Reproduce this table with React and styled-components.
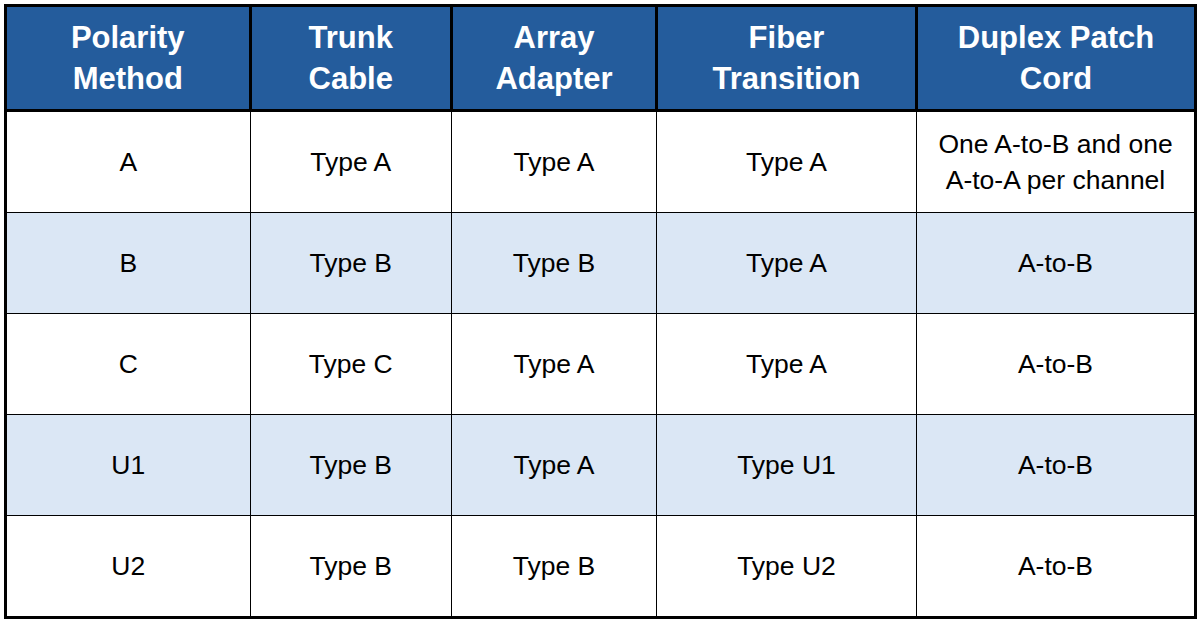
import styled, { createGlobalStyle } from 'styled-components';

const GlobalStyle = createGlobalStyle`
  html, body {
    margin: 0;
    padding: 0;
    background: #fff;
  }
  body {
    font-family: "Liberation Sans", Arial, Helvetica, sans-serif;
  }
`;

const columns = [
  { label: ['Polarity', 'Method'], width: 244.5 },
  { label: ['Trunk', 'Cable'], width: 201.5 },
  { label: ['Array', 'Adapter'], width: 205 },
  { label: ['Fiber', 'Transition'], width: 260 },
  { label: ['Duplex Patch', 'Cord'], width: 279 },
];

const rows = [
  ['A', 'Type A', 'Type A', 'Type A', ['One A-to-B and one', 'A-to-A per channel']],
  ['B', 'Type B', 'Type B', 'Type A', 'A-to-B'],
  ['C', 'Type C', 'Type A', 'Type A', 'A-to-B'],
  ['U1', 'Type B', 'Type A', 'Type U1', 'A-to-B'],
  ['U2', 'Type B', 'Type B', 'Type U2', 'A-to-B'],
];

const renderLines = (value) =>
  Array.isArray(value)
    ? value.map((line, i) => <Line key={i}>{line}</Line>)
    : value;

const PolarityTable = () => {
  return (
    <>
      <GlobalStyle />
      <Wrapper>
        <Table>
          <colgroup>
            {columns.map((col, i) => (
              <col key={i} style={{ width: col.width }} />
            ))}
          </colgroup>
          <thead>
            <tr>
              {columns.map((col, i) => (
                <HeadCell key={i}>{renderLines(col.label)}</HeadCell>
              ))}
            </tr>
          </thead>
          <tbody>
            {rows.map((row, r) => (
              <Row
                key={r}
                $shaded={r % 2 === 1}
                $tall={r === 0 || r === rows.length - 1}
              >
                {row.map((cell, c) => (
                  <Cell key={c}>{renderLines(cell)}</Cell>
                ))}
              </Row>
            ))}
          </tbody>
        </Table>
      </Wrapper>
    </>
  );
};

const Wrapper = styled.div`
  padding: 4px 0 0 4px;
`;

const Table = styled.table`
  border-collapse: collapse;
  table-layout: fixed;
  width: 1190px;
  border: 3px solid #000;
`;

const HeadCell = styled.th`
  height: 105px;
  padding: 0;
  box-sizing: border-box;
  background: #245c9c;
  color: #fff;
  border: 3px solid #000;
  font-size: 31px;
  font-weight: 700;
  line-height: 41px;
  text-align: center;
  vertical-align: middle;
`;

const Row = styled.tr`
  height: ${(p) => (p.$tall ? 102 : 101)}px;
  background: ${(p) => (p.$shaded ? '#dbe7f5' : '#fff')};
`;

const Cell = styled.td`
  padding: 0;
  border: 1px solid #000;
  color: #000;
  font-size: 26.5px;
  line-height: 36px;
  text-align: center;
  vertical-align: middle;
`;

const Line = styled.div`
  white-space: nowrap;
`;

export default PolarityTable;
